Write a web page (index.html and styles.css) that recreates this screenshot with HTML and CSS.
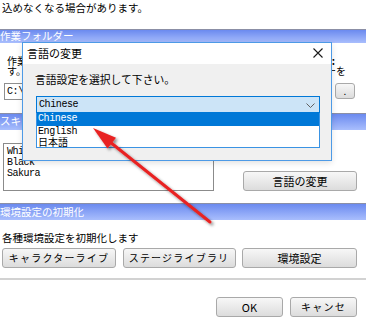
FILE: index.html
```html
<!DOCTYPE html>
<html lang="ja">
<head>
<meta charset="utf-8">
<title>言語の変更</title>
<link rel="stylesheet" href="styles.css">
</head>
<body>
<div class="page">
  <p class="note">込めなくなる場合があります。</p>

  <div class="bar bar-folder">作業フォルダー</div>
  <div class="section folder">
    <div class="desc-line line1"><span>作業</span><span class="frag">:</span></div>
    <div class="desc-line line2"><span>す。</span><span>ーを</span></div>
    <div class="input-row">
      <div class="path-input">C:\</div>
      <button class="btn btn-browse">.</button>
    </div>
  </div>

  <div class="bar bar-skin">スキン</div>
  <div class="section skin">
    <div class="listbox">
      <div>White</div>
      <div>Black</div>
      <div>Sakura</div>
    </div>
    <button class="btn btn-lang">言語の変更</button>
  </div>

  <div class="bar bar-init">環境設定の初期化</div>
  <div class="section init">
    <div class="init-text">各種環境設定を初期化します</div>
    <div class="init-buttons">
      <button class="btn btn-kana">キャラクターライブ</button>
      <button class="btn btn-kana">ステージライブラリ</button>
      <button class="btn">環境設定</button>
    </div>
  </div>

  <div class="separator"></div>

  <div class="footer">
    <button class="btn btn-foot">OK</button>
    <button class="btn btn-foot btn-kana">キャンセ</button>
  </div>

  <div class="dialog">
    <div class="dialog-title">
      <span>言語の変更</span>
      <svg class="close" width="10" height="10" viewBox="0 0 10 10"><path d="M0.5 0.5 L9.5 9.5 M9.5 0.5 L0.5 9.5" stroke="#1a1a1a" stroke-width="1.1" fill="none"/></svg>
    </div>
    <div class="dialog-body">
      <div class="dialog-label">言語設定を選択して下さい。</div>
      <div class="combo">
        <span class="combo-value">Chinese</span>
        <svg class="chevron" width="9" height="5" viewBox="0 0 9 5"><path d="M0.5 0.5 L4.5 4.5 L8.5 0.5" stroke="#606060" stroke-width="1" fill="none"/></svg>
        <div class="dropdown">
          <div class="opt opt-selected">Chinese</div>
          <div class="opt">English</div>
          <div class="opt opt-jp">日本語</div>
        </div>
      </div>
    </div>
  </div>

  <svg class="arrow" width="366" height="323" viewBox="0 0 366 323">
    <defs>
      <filter id="sh" x="-20%" y="-20%" width="140%" height="140%">
        <feDropShadow dx="2" dy="2" stdDeviation="1.5" flood-color="#000" flood-opacity="0.45"/>
      </filter>
    </defs>
    <g filter="url(#sh)">
      <line x1="210" y1="222" x2="110" y2="142" stroke="#e82222" stroke-width="3" stroke-linecap="round"/>
      <polygon points="93,128 107.5,148.5 116,137.8" fill="#e82222"/>
    </g>
  </svg>
</div>
</body>
</html>
```

FILE: styles.css
```css
* { box-sizing: border-box; }

html, body {
  margin: 0;
  padding: 0;
  background: #ffffff;
}

body {
  font-family: "Noto Sans CJK JP", "Liberation Sans", sans-serif;
  font-size: 11px;
  color: #000;
}

.page {
  position: relative;
  width: 366px;
  height: 323px;
  overflow: hidden;
  background: #fff;
}

.note {
  margin: 0;
  height: 29px;
  padding: 1px 0 0 2px;
  font-size: 10.5px;
  line-height: 14px;
  white-space: nowrap;
}

.bar {
  background: linear-gradient(#6b8aef, #a9befd);
  border-top: 1px solid #8b8fa6;
  color: #fff;
  font-size: 10.5px;
  white-space: nowrap;
  overflow: hidden;
}

.bar-folder { height: 14px; line-height: 12px; }
.bar-skin { height: 17px; line-height: 14px; }
.bar-init { height: 17px; line-height: 15px; }

.section { overflow: hidden; }

/* folder */
.folder {
  height: 70px;
  padding: 13px 0 0 4px;
}

.desc-line {
  display: flex;
  justify-content: space-between;
  height: 10px;
  font-size: 10px;
  line-height: 10px;
  padding-left: 3px;
  white-space: nowrap;
}
.line1 { padding-right: 31px; }
.line2 { padding-right: 20px; }
.frag { font-weight: bold; }

.input-row {
  display: flex;
  align-items: flex-start;
  margin-top: 7px;
}

.path-input {
  width: 326px;
  height: 17px;
  border: 1px solid #8f8f8f;
  background: #fff;
  font-family: "Liberation Mono", monospace;
  font-size: 10px;
  letter-spacing: -0.4px;
  line-height: 15px;
  padding-left: 2px;
}

.btn {
  font-family: "Noto Sans CJK JP", sans-serif;
  font-size: 11px;
  color: #000;
  height: 20px;
  padding: 0;
  line-height: 18px;
  border: 1px solid #a9a9a9;
  border-radius: 3px;
  background: linear-gradient(#f7f7f7, #dcdcdc);
  white-space: nowrap;
}

.btn-browse {
  margin-left: 5px;
  width: 20px;
  height: 16px;
  line-height: 10px;
  font-size: 10px;
}

/* skin */
.skin {
  height: 73px;
  padding: 13px 9px 0 3px;
  display: flex;
  justify-content: space-between;
  align-items: flex-start;
}

.listbox {
  width: 211px;
  height: 48px;
  border: 1px solid #8b8b8b;
  background: #fff;
  padding: 2px 3px;
  font-family: "Liberation Mono", monospace;
  font-size: 10px;
  letter-spacing: -0.5px;
  line-height: 11px;
}

.btn-lang {
  width: 114px;
  margin-top: 28px;
}

/* init */
.init {
  height: 58px;
  padding: 11px 9px 0 2px;
}

.init-text {
  line-height: 13px;
  font-size: 10.5px;
  white-space: nowrap;
}

.init-buttons {
  display: grid;
  grid-template-columns: 114px 113px 115px;
  justify-content: space-between;
  margin-top: 4px;
}

.btn-kana {
  font-size: 10px;
  letter-spacing: 1.2px;
}

.separator {
  height: 2px;
  background: #d2d2d2;
}

.footer {
  display: flex;
  justify-content: flex-end;
  gap: 7px;
  padding: 17px 9px 0 0;
}

.btn-foot {
  width: 67px;
}

/* dialog */
.dialog {
  position: absolute;
  left: 22px;
  top: 42px;
  width: 310px;
  height: 119px;
  border: 1px solid #4d9ae6;
  background: #f0f0f0;
  box-shadow: 0 2px 6px rgba(0, 0, 0, 0.12);
}

.dialog-title {
  position: relative;
  height: 21px;
  background: #fff;
  line-height: 21px;
  padding-left: 4px;
  font-size: 11px;
}

.close {
  position: absolute;
  right: 8px;
  top: 5px;
}

.dialog-body {
  padding: 9px 0 0 12px;
}

.dialog-label {
  line-height: 13px;
  font-size: 10.8px;
  white-space: nowrap;
}

.combo {
  position: relative;
  margin: 10px 0 0 1px;
  width: 284px;
  height: 17px;
  background: #cce4f7;
  border: 1px solid #0078d7;
  font-family: "Liberation Mono", monospace;
  font-size: 10px;
  letter-spacing: -0.4px;
  line-height: 15px;
  padding-left: 2px;
}

.chevron {
  position: absolute;
  right: 4px;
  top: 6px;
}

.dropdown {
  position: absolute;
  top: 16px;
  left: -1px;
  width: 284px;
  background: #fff;
  border: 1px solid #3a93e3;
  border-top: none;
}

.opt {
  height: 11px;
  line-height: 11px;
  padding-left: 1px;
  white-space: nowrap;
}

.opt-selected {
  height: 13px;
  line-height: 12px;
  background: #0078d7;
  color: #fff;
}

.opt-jp {
  height: 10px;
  line-height: 10px;
  font-family: "Noto Sans CJK JP", sans-serif;
  font-size: 10px;
  letter-spacing: 0;
}

.arrow {
  position: absolute;
  left: 0;
  top: 0;
  pointer-events: none;
}
```
